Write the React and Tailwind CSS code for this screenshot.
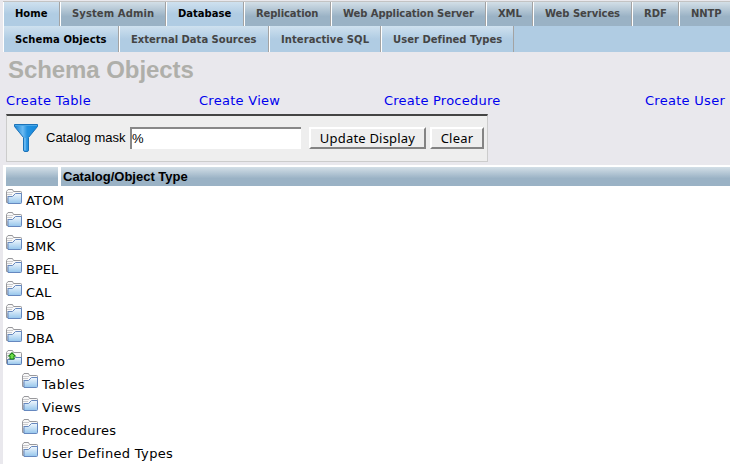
import React from "react";

const dv = "font-['DejaVu_Sans',Verdana,sans-serif]";
const arial = "font-['Liberation_Sans',Arial,sans-serif]";

const mainTabs = [
  { label: "Home", w: "w-[57px]", active: true },
  { label: "System Admin", w: "w-[106px]", t: "tracking-[0.1px]" },
  { label: "Database", w: "w-[78px]", active: true },
  { label: "Replication", w: "w-[87px]", t: "tracking-[-0.1px]" },
  { label: "Web Application Server", w: "w-[155px]", t: "tracking-[-0.08px]" },
  { label: "XML", w: "w-[47px]", t: "tracking-[-0.1px]" },
  { label: "Web Services", w: "w-[99px]", t: "tracking-[-0.05px]" },
  { label: "RDF", w: "w-[47px]" },
  { label: "NNTP", w: "w-[60px]", t: "tracking-[-0.1px]" },
];

const subTabs = [
  { label: "Schema Objects", w: "w-[116px]", active: true, t: "tracking-[0.1px]" },
  { label: "External Data Sources", w: "w-[150px]" },
  { label: "Interactive SQL", w: "w-[112px]", t: "tracking-[0.07px]" },
  { label: "User Defined Types", w: "w-[133px]", t: "tracking-[0.03px]" },
];

const links = [
  { label: "Create Table", w: "w-[193px]", t: "tracking-[0.35px]" },
  { label: "Create View", w: "w-[185px]", t: "tracking-[0.28px]" },
  { label: "Create Procedure", w: "w-[261px]", t: "tracking-[0.24px]" },
  { label: "Create User", w: "w-[85px]", t: "tracking-[0.28px]" },
];

const rows = [
  { label: "ATOM", t: "tracking-[0.2px]" },
  { label: "BLOG" },
  { label: "BMK", t: "tracking-[0.2px]" },
  { label: "BPEL" },
  { label: "CAL" },
  { label: "DB" },
  { label: "DBA" },
  { label: "Demo", open: true, t: "tracking-[0.1px]" },
  { label: "Tables", child: true, t: "tracking-[0.45px]" },
  { label: "Views", child: true, t: "tracking-[0.3px]" },
  { label: "Procedures", child: true, t: "tracking-[0.22px]" },
  { label: "User Defined Types", child: true, t: "tracking-[0.33px]" },
];

function Folder({ open }) {
  return (
    <svg width="16" height="16" viewBox="0 0 16 16" className="shrink-0">
      <defs>
        <linearGradient id="folderFace" x1="0" y1="0" x2="0" y2="1">
          <stop offset="0" stopColor="#f2f8fd" />
          <stop offset="1" stopColor="#94c5ec" />
        </linearGradient>
      </defs>
      <path d="M.5 13.500V2.500L2 .5h4.500l1 2h7.200q.8 0 .8.800V9H2v4.500z" fill="#f8f8f8" stroke="#98989c" />
      <path d="M1 3.500h6M1 5.500h5M1 7.500h1M1 9.500h1M1 11.500h1" stroke="#cacacd" />
      {open ? (
        <path d="M1.500 14.500V9.500h6l2-2h6v6q0 1-1 1z" fill="url(#folderFace)" stroke="#5d80b8" />
      ) : (
        <path d="M2 14.500V7.500H6.500L9.500 4.500h6v9q0 1-1 1z" fill="url(#folderFace)" stroke="#6688bf" />
      )}
      {open && (
        <>
          <path d="M6 2L10.500 6.500H8.500V9.500H3.500V6.500H1.500z" fill="#12780f" />
          <path d="M6 3.500L8.500 6H7.500V8.500H4.500V6H3.500z" fill="#6fdf4c" />
        </>
      )}
    </svg>
  );
}

function Funnel() {
  return (
    <svg width="26" height="30" viewBox="0 0 26 30" className="shrink-0">
      <defs>
        <linearGradient id="funnel" x1="0" y1="0" x2="1" y2="0">
          <stop offset="0" stopColor="#1780cf" />
          <stop offset=".36" stopColor="#6bbaf2" />
          <stop offset=".55" stopColor="#2592e0" />
          <stop offset="1" stopColor="#1288dc" />
        </linearGradient>
      </defs>
      <path d="M1.500 1.500h23v2L15.500 14.500v12.500q0 1.500-1.500 1.500h-2q-1.500 0-1.500-1.500V14.500L1.500 3.500z" fill="url(#funnel)" stroke="#1b72b8" />
      <path d="M2 2.500h22" stroke="#49a8e8" />
      <path d="M12 15v12" stroke="#7cc4f5" />
    </svg>
  );
}

export default function App() {
  return (
    <div className={`h-[464px] w-[730px] overflow-hidden bg-[#e9e8ed] text-black ${dv}`}>
      <div className="mt-px h-px" />
      <nav className="-mt-px ml-[3px] flex h-[25px] w-[740px] border-t border-[#c3c3c3] text-[10px] font-bold">
        {mainTabs.map((t) => (
          <div
            key={t.label}
            className={`${t.w} flex shrink-0 items-center whitespace-nowrap border-l border-r border-l-white border-r-[#a3a3a3] pl-[11px] pb-px ${t.t || ""} ${
              t.active
                ? "bg-linear-to-b from-[#cfe1ef] to-[#b0cce3] to-50% text-black"
                : "bg-linear-to-b from-[#d3dfe7] to-[#9ab2c5] to-60% text-[#444]"
            }`}
          >
            <span>{t.label}</span>
          </div>
        ))}
      </nav>
      <nav className="ml-[3px] flex h-[26px] bg-[#b0cce3] text-[10px] font-bold">
        {subTabs.map((t) => (
          <div
            key={t.label}
            className={`${t.w} flex shrink-0 items-center whitespace-nowrap border-l border-r border-l-white border-r-[#a3a3a3] bg-linear-to-b from-[#cfe1ef] to-[#b0cce3] to-50% pl-[11px] ${t.t || ""} ${
              t.active ? "text-black" : "text-[#444]"
            }`}
          >
            <span>{t.label}</span>
          </div>
        ))}
      </nav>
      <h1 className={`h-[40px] pl-2 pt-[4px] text-[24px] leading-[28px] font-bold tracking-[-0.07px] text-[#afafaa] ${arial}`}>Schema Objects</h1>
      <div className="flex h-[22px] pl-[6px] text-[13px] leading-[17px] text-[#0000ee]">
        {links.map((l) => (
          <a key={l.label} className={`${l.w} ${l.t} shrink-0 whitespace-nowrap`}>
            {l.label}
          </a>
        ))}
      </div>
      <div className="ml-[6px] flex h-[48px] w-[482px] items-start border border-t-2 border-[#ccc] border-t-[#444] bg-[#eee]">
        <div className="ml-[6px] mt-[7px]">
          <Funnel />
        </div>
        <span className={`ml-[7px] mt-[14px] w-[84px] whitespace-nowrap text-[13px] leading-[16px] ${arial}`}>Catalog mask</span>
        <div className={`mt-[11px] h-[22px] w-[171px] border-l-2 border-t-2 border-[#888] bg-white text-[13px] leading-[19px] tracking-tight ${arial}`}>
          <span>%</span>
        </div>
        <button className="ml-[8px] mt-[11px] h-[22px] w-[117px] whitespace-nowrap border-2 border-white border-r-[#848484] border-b-[#848484] bg-[#eee] text-[13px] leading-[17px] tracking-[0.2px] font-['Noto_Sans',sans-serif]">
          Update Display
        </button>
        <button className="ml-[4px] mt-[11px] h-[22px] w-[54px] border-2 border-white border-r-[#848484] border-b-[#848484] bg-[#eee] text-[13px] leading-[17px] tracking-[0.2px] font-['Noto_Sans',sans-serif]">
          Clear
        </button>
      </div>
      <div className="mt-[3px] ml-[3px] h-[310px] bg-white pt-[2px] pl-[3px]">
        <div className={`flex h-[19px] gap-[3px] text-[13px] leading-[19px] font-bold ${arial}`}>
          <div className="w-[52px] bg-linear-to-b from-[#d3dfe7] to-[#9ab2c5] to-60%" />
          <div className="flex-1 bg-linear-to-b from-[#d3dfe7] to-[#9ab2c5] to-60% pl-[2px]">Catalog/Object Type</div>
        </div>
        <div className="pt-[3px]">
          {rows.map((r) => (
            <div key={r.label} className={`flex h-[23px] gap-1 text-[13px] ${r.child ? "pl-4" : ""}`}>
              <Folder open={r.open} />
              <span className={`mt-[3px] leading-[17px] ${r.t || ""}`}>{r.label}</span>
            </div>
          ))}
        </div>
      </div>
    </div>
  );
}
